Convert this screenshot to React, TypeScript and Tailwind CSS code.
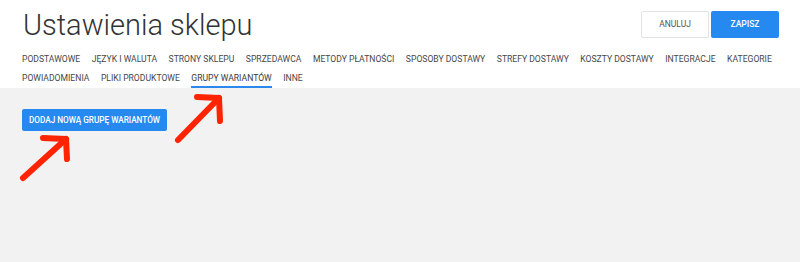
const rowOne = [
	"Podstawowe",
	"Język i waluta",
	"Strony sklepu",
	"Sprzedawca",
	"Metody płatności",
	"Sposoby dostawy",
	"Strefy dostawy",
	"Koszty dostawy",
	"Integracje",
	"Kategorie",
];

const rowTwo = ["Powiadomienia", "Pliki produktowe", "Grupy wariantów", "Inne"];

const ACTIVE = "Grupy wariantów";

function Tab({ label }: { label: string }) {
	const active = label === ACTIVE;
	return (
		<span
			className={`flex items-center h-full uppercase border-b-2 pt-[2px] ${
				active ? "border-[#2a88ee] text-[#3a3a3a]" : "border-transparent text-[#474747]"
			}`}
		>
			{label}
		</span>
	);
}

function Arrow({ tail, corner, left, down }: { tail: string; corner: string; left: string; down: string }) {
	return (
		<g stroke="#ff2400" strokeWidth={6} strokeLinecap="round" strokeLinejoin="round" fill="none">
			<path d={`M${tail} L${corner}`} />
			<path d={`M${left} L${corner} L${down}`} />
		</g>
	);
}

export default function App() {
	return (
		<div className="relative w-[800px] h-[262px] flex flex-col bg-[#f2f2f2] font-['Roboto',sans-serif] overflow-hidden">
			<div className="bg-white px-[22px] pt-[8px] shrink-0">
				<div className="flex justify-between items-start h-[42px]">
					<h1 className="text-[29px] leading-[34px] font-light text-[#333] pl-[1px]">Ustawienia sklepu</h1>
					<div className="flex gap-[2px] mt-[3px] mr-[-1px]">
						<button className="w-[68px] h-[27px] bg-white border border-[#e3e3e3] rounded-[2px] text-[8.5px] text-[#555] uppercase">
							Anuluj
						</button>
						<button className="w-[68px] h-[27px] bg-[#2589f0] rounded-[2px] text-[8.5px] font-medium text-white uppercase">
							Zapisz
						</button>
					</div>
				</div>
				<div className="flex gap-[11.5px] h-[19px] text-[8.6px]">
					{rowOne.map((t) => (
						<Tab key={t} label={t} />
					))}
				</div>
				<div className="flex gap-[11.5px] h-[19px] text-[8.6px]">
					{rowTwo.map((t) => (
						<Tab key={t} label={t} />
					))}
				</div>
			</div>
			<div className="flex-1 px-[22px] pt-[18px]">
				<button className="h-[22px] px-[7px] bg-[#2589f0] rounded-[2px] text-[8.2px] font-medium text-white uppercase">
					Dodaj nową grupę wariantów
				</button>
			</div>
			<svg className="absolute inset-0 pointer-events-none" width={800} height={262} viewBox="0 0 800 262">
				<Arrow tail="23,178" corner="66,139" left="43,138" down="67,159" />
				<Arrow tail="178,140" corner="219,98" left="197,97" down="220,121" />
			</svg>
		</div>
	);
}
